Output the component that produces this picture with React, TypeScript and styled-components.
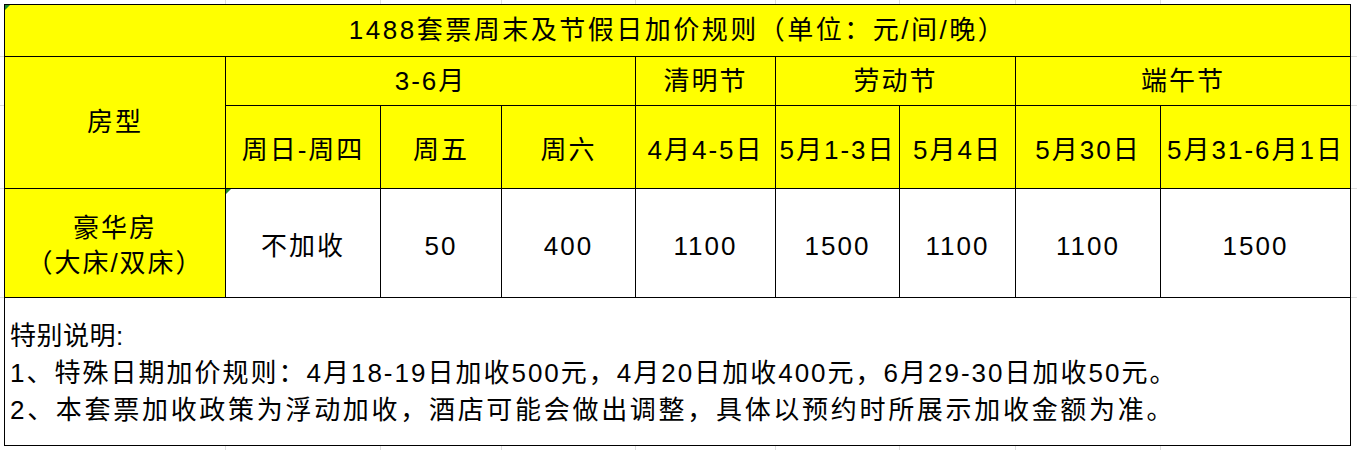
import { createGlobalStyle, styled } from "styled-components";

const GlobalStyle = createGlobalStyle`
  html, body {
    margin: 0;
    padding: 0;
    background: #ffffff;
  }
`;

const gridLine = "#dddddd";

const vLines = [225, 380, 501, 635, 775, 899, 1015, 1160];
const hLines = [56, 105, 188, 297];

const sheetBackground = [
  ...vLines.map((x) => `linear-gradient(${gridLine}, ${gridLine}) ${x}px 0 / 1px 100% no-repeat`),
  ...hLines.map((y) => `linear-gradient(${gridLine}, ${gridLine}) 0 ${y}px / 100% 1px no-repeat`),
].join(", ");

const Sheet = styled.div`
  width: 1357px;
  height: 450px;
  box-sizing: border-box;
  padding: 4px 0 0 4px;
  background: ${sheetBackground};
  font-family: "Liberation Sans", "Noto Sans CJK SC", sans-serif;
  color: #000;
`;

const Table = styled.div`
  display: grid;
  width: max-content;
  grid-template-columns: 220px 154px 120px 133px 139px 123px 115px 144px 189px;
  grid-template-rows: 51px 48px 82px 108px 147px;
  gap: 1px;
  padding: 1px;
  background: #000;
`;

const Cell = styled.div<{
  $col?: string;
  $row?: string;
  $white?: boolean;
  $mark?: boolean;
  $drop?: number;
  $spacing?: number;
}>`
  position: relative;
  grid-column: ${(p) => p.$col || "auto"};
  grid-row: ${(p) => p.$row || "auto"};
  background: ${(p) => (p.$white ? "#ffffff" : "#ffff00")};
  display: flex;
  align-items: center;
  justify-content: center;
  text-align: center;
  font-size: 26px;
  letter-spacing: ${(p) => p.$spacing ?? 2}px;
  line-height: 35px;
  white-space: nowrap;
  padding-top: ${(p) => p.$drop || 0}px;
  box-sizing: border-box;

  ${(p) =>
    p.$mark &&
    `
    &::before {
      content: "";
      position: absolute;
      top: 0;
      left: 0;
      border-top: 5px solid #1f8a2a;
      border-right: 5px solid transparent;
    }
  `}
`;

const Notes = styled.div`
  grid-column: 1 / -1;
  background: #ffffff;
  display: flex;
  flex-direction: column;
  justify-content: center;
  padding: 3px 0 0 5px;
  font-size: 26px;
  line-height: 37px;
  white-space: nowrap;
`;

const NoteLine = styled.div<{ $spacing: number }>`
  letter-spacing: ${(p) => p.$spacing}px;
`;

const subHeads = ["周日-周四", "周五", "周六", "4月4-5日", "5月1-3日", "5月4日", "5月30日", "5月31-6月1日"];
const prices = ["不加收", "50", "400", "1100", "1500", "1100", "1100", "1500"];

const App = () => {
  return (
    <>
      <GlobalStyle />
      <Sheet>
        <Table>
          <Cell $col="1 / -1" $mark $spacing={2.5}>
            1488套票周末及节假日加价规则（单位：元/间/晚）
          </Cell>

          <Cell $col="1" $row="2 / 4">
            房型
          </Cell>
          <Cell $col="2 / 5">3-6月</Cell>
          <Cell $col="5">清明节</Cell>
          <Cell $col="6 / 8">劳动节</Cell>
          <Cell $col="8 / 10">端午节</Cell>

          {subHeads.map((label) => (
            <Cell key={label} $drop={6}>
              {label}
            </Cell>
          ))}

          <Cell $drop={6}>
            豪华房
            <br />
            （大床/双床）
          </Cell>
          {prices.map((price, i) => (
            <Cell key={i} $white $mark={i === 0} $drop={6}>
              {price}
            </Cell>
          ))}

          <Notes>
            <NoteLine $spacing={0.5}>特别说明:</NoteLine>
            <NoteLine $spacing={2}>
              1、特殊日期加价规则：4月18-19日加收500元，4月20日加收400元，6月29-30日加收50元。
            </NoteLine>
            <NoteLine $spacing={2.7}>
              2、本套票加收政策为浮动加收，酒店可能会做出调整，具体以预约时所展示加收金额为准。
            </NoteLine>
          </Notes>
        </Table>
      </Sheet>
    </>
  );
};

export default App;
